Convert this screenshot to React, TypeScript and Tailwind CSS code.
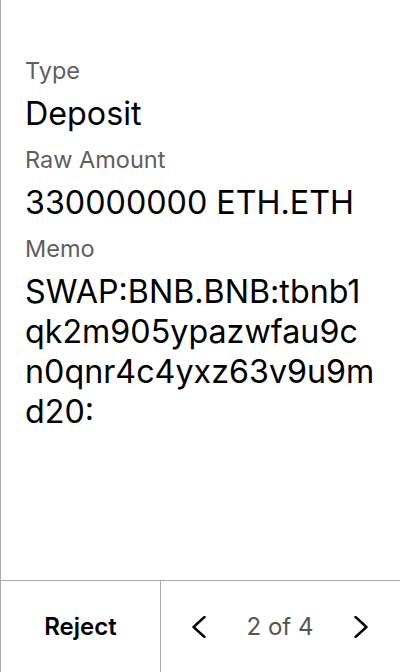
import React from "react";

function Chevron({ dir }: { dir: "left" | "right" }) {
  return (
    <svg width="14" height="22" viewBox="0 0 14 22" fill="none" className="block">
      <polyline
        points={dir === "left" ? "12.5,1 1.5,11 12.5,21" : "1.5,1 12.5,11 1.5,21"}
        stroke="#000"
        strokeWidth="2.4"
        strokeLinecap="round"
        strokeLinejoin="round"
        fill="none"
      />
    </svg>
  );
}

function Field({ label, children }: { label: string; children: React.ReactNode }) {
  return (
    <div className="flex flex-col gap-[8px]">
      <div className="text-[23.5px] leading-[30px] text-[#5f5f5f]">{label}</div>
      <div className="text-[32.25px] leading-[40px] text-black">{children}</div>
    </div>
  );
}

const memoLines = ["SWAP:BNB.BNB:tbnb1", "qk2m905ypazwfau9c", "n0qnr4c4yxz63v9u9m", "d20:"];

export default function App() {
  return (
    <div
      className="w-[400px] h-[672px] flex flex-col bg-white border-l border-[#aaaaaa]"
      style={{ fontFamily: "Inter, 'Noto Sans', sans-serif" }}
    >
      <div className="flex-1 flex flex-col gap-[11px] pt-[56px] pl-[24px] pr-[20px]">
        <Field label="Type">Deposit</Field>
        <Field label="Raw Amount">330000000 ETH.ETH</Field>
        <Field label="Memo">
          {memoLines.map((l) => (
            <div key={l} className="whitespace-nowrap">
              {l}
            </div>
          ))}
        </Field>
      </div>
      <div className="h-[92px] flex border-t border-[#aaaaaa]">
        <div className="w-[160px] flex items-center justify-center border-r border-[#aaaaaa]">
          <span className="text-[24px] font-semibold text-black">Reject</span>
        </div>
        <div className="flex-1 flex items-center justify-between pl-[31px] pr-[32px]">
          <Chevron dir="left" />
          <span className="text-[24px] text-[#555555]">2 of 4</span>
          <Chevron dir="right" />
        </div>
      </div>
    </div>
  );
}
